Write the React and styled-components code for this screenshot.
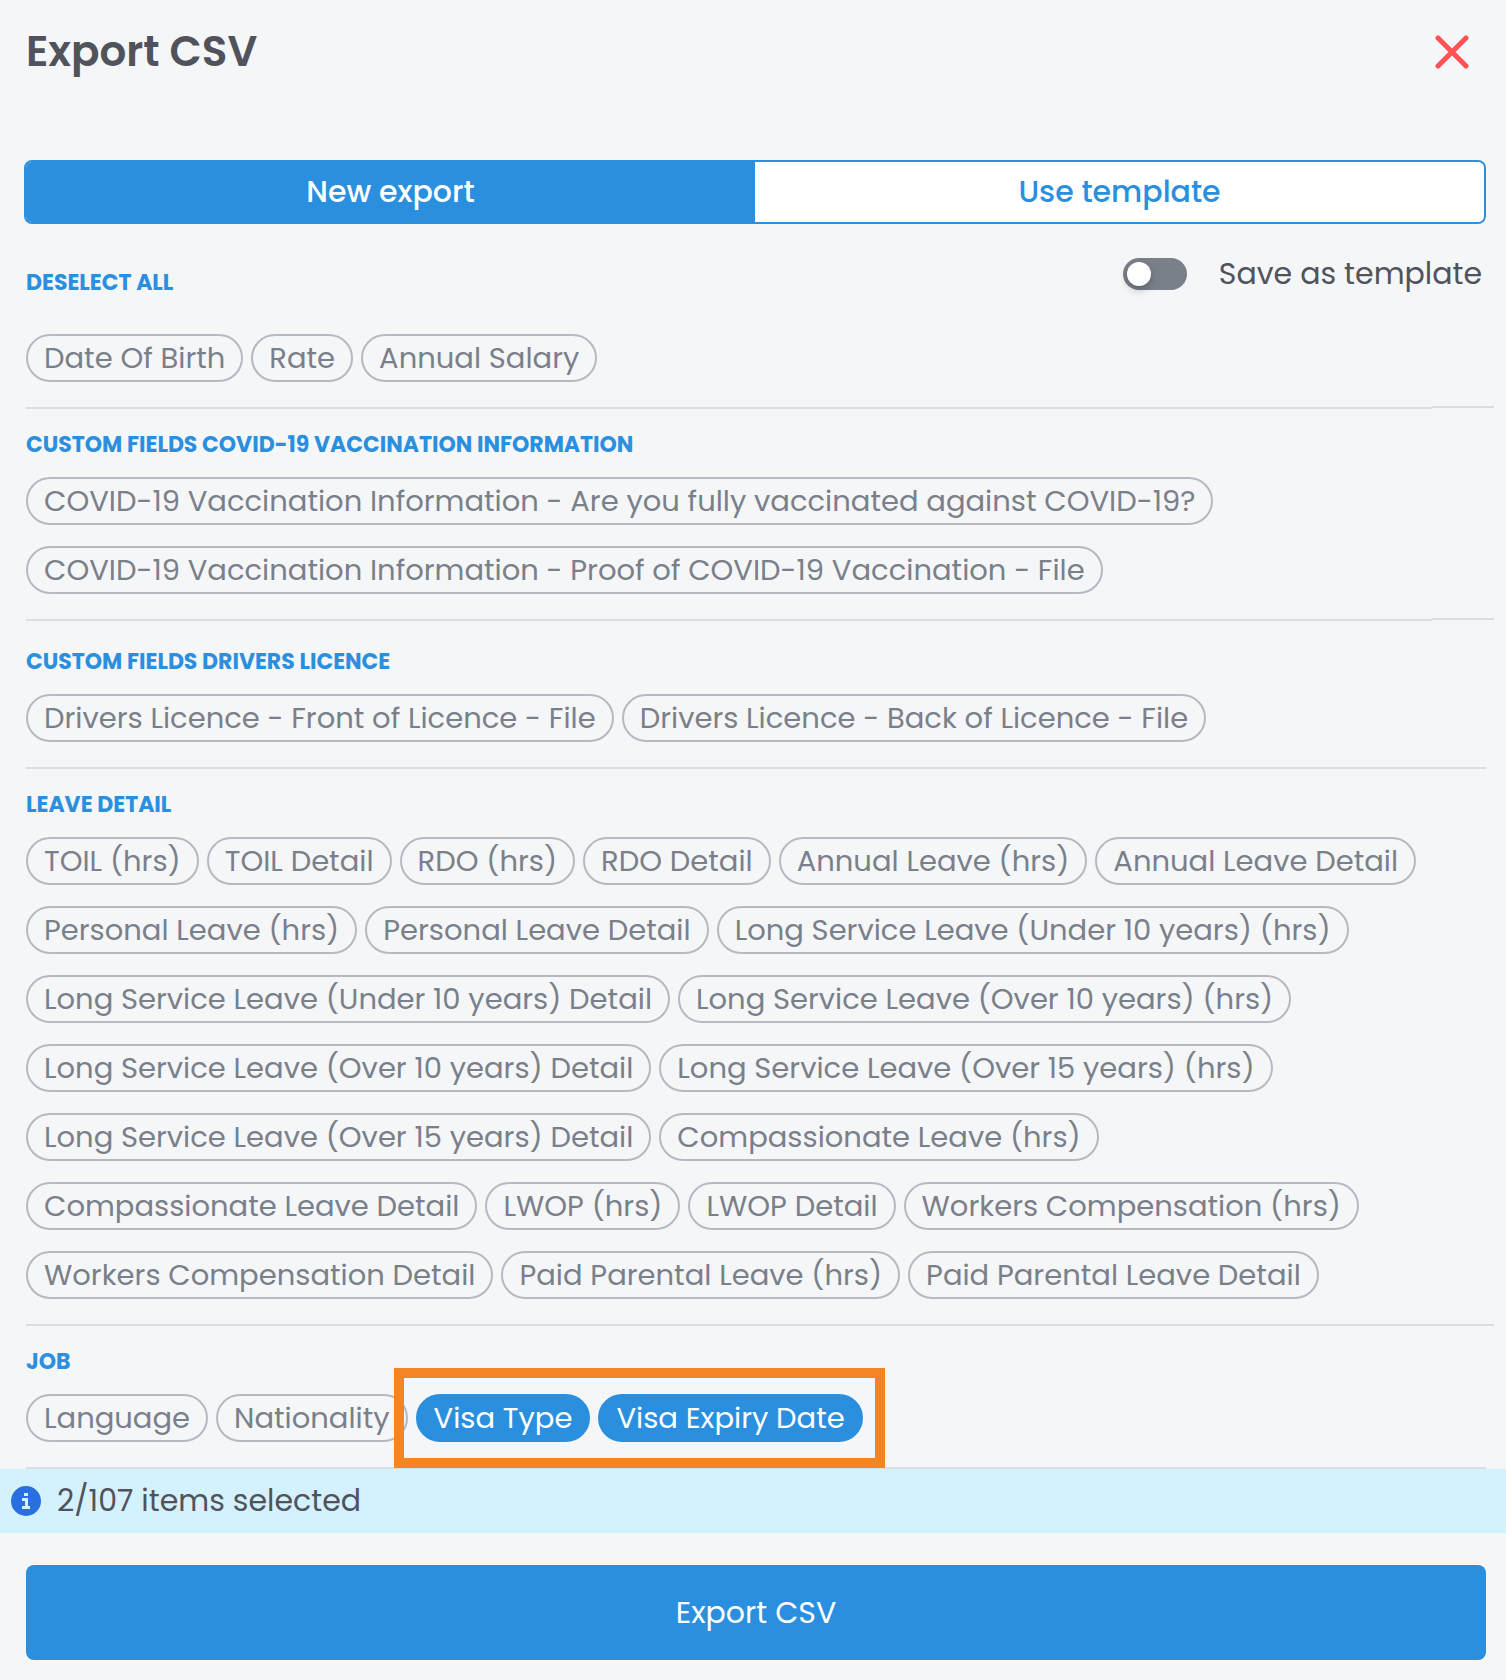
import { useState } from 'react'
import styled, { createGlobalStyle } from 'styled-components'

const general = ['Date Of Birth', 'Rate', 'Annual Salary']

const covid = [
  'COVID-19 Vaccination Information - Are you fully vaccinated against COVID-19?',
  'COVID-19 Vaccination Information - Proof of COVID-19 Vaccination - File',
]

const licence = [
  'Drivers Licence - Front of Licence - File',
  'Drivers Licence - Back of Licence - File',
]

const leave = [
  'TOIL (hrs)',
  'TOIL Detail',
  'RDO (hrs)',
  'RDO Detail',
  'Annual Leave (hrs)',
  'Annual Leave Detail',
  'Personal Leave (hrs)',
  'Personal Leave Detail',
  'Long Service Leave (Under 10 years) (hrs)',
  'Long Service Leave (Under 10 years) Detail',
  'Long Service Leave (Over 10 years) (hrs)',
  'Long Service Leave (Over 10 years) Detail',
  'Long Service Leave (Over 15 years) (hrs)',
  'Long Service Leave (Over 15 years) Detail',
  'Compassionate Leave (hrs)',
  'Compassionate Leave Detail',
  'LWOP (hrs)',
  'LWOP Detail',
  'Workers Compensation (hrs)',
  'Workers Compensation Detail',
  'Paid Parental Leave (hrs)',
  'Paid Parental Leave Detail',
]

const job = ['Language', 'Nationality']
const visa = ['Visa Type', 'Visa Expiry Date']

function App() {
  const [tab, setTab] = useState('new')
  const [saveTemplate, setSaveTemplate] = useState(false)
  const [selected, setSelected] = useState(visa)

  const toggle = (name) => {
    setSelected((prev) =>
      prev.includes(name) ? prev.filter((item) => item !== name) : [...prev, name]
    )
  }

  const renderChips = (names) =>
    names.map((name) => (
      <Chip
        key={name}
        type="button"
        $active={selected.includes(name)}
        aria-pressed={selected.includes(name)}
        onClick={() => toggle(name)}
      >
        {name}
      </Chip>
    ))

  return (
    <Panel>
      <GlobalStyle />
      <Header>
        <Title>Export CSV</Title>
        <CloseButton type="button" aria-label="Close">
          <svg width="34" height="34" viewBox="0 0 34 34" fill="none" stroke="#ff5353" strokeWidth="5" strokeLinecap="round">
            <path d="M3 3L31 31M31 3L3 31" />
          </svg>
        </CloseButton>
      </Header>

      <Tabs>
        <Tab type="button" $active={tab === 'new'} onClick={() => setTab('new')}>
          New export
        </Tab>
        <Tab type="button" $active={tab === 'template'} onClick={() => setTab('template')}>
          Use template
        </Tab>
      </Tabs>

      <Toolbar>
        <DeselectButton type="button" onClick={() => setSelected([])}>
          DESELECT ALL
        </DeselectButton>
        <SwitchLabel htmlFor="save-template">
          <Switch
            id="save-template"
            type="checkbox"
            checked={saveTemplate}
            onChange={(e) => setSaveTemplate(e.target.checked)}
          />
          Save as template
        </SwitchLabel>
      </Toolbar>

      <Section>
        <Chips>{renderChips(general)}</Chips>
        <SteppedDivider />
      </Section>

      <Section>
        <SectionTitle>CUSTOM FIELDS COVID-19 VACCINATION INFORMATION</SectionTitle>
        <Chips>{renderChips(covid)}</Chips>
        <SteppedDivider />
      </Section>

      <Section>
        <SectionTitle $spaced>CUSTOM FIELDS DRIVERS LICENCE</SectionTitle>
        <Chips>{renderChips(licence)}</Chips>
        <Divider />
      </Section>

      <Section>
        <SectionTitle>LEAVE DETAIL</SectionTitle>
        <Chips>{renderChips(leave)}</Chips>
        <Divider $wide />
      </Section>

      <Section>
        <SectionTitle>JOB</SectionTitle>
        <Chips>
          {renderChips(job)}
          <Highlight>{renderChips(visa)}</Highlight>
        </Chips>
        <Divider />
      </Section>

      <InfoBar>
        <svg width="30" height="30" viewBox="0 0 30 30">
          <circle cx="15" cy="15" r="15" fill="#2a6fdf" />
          <path d="M13 7h4v3h-4zM11 12h6v8h2v3h-8v-3h3v-5h-3z" fill="#d4f2fe" />
        </svg>
        {selected.length}/107 items selected
      </InfoBar>

      <ExportButton type="button">Export CSV</ExportButton>
    </Panel>
  )
}

const GlobalStyle = createGlobalStyle`
  * {
    box-sizing: border-box;
  }

  body {
    margin: 0;
    background: #f5f6f8;
  }

  body, button, input {
    font-family: Poppins, Inter, sans-serif;
  }
`

const Panel = styled.main`
  display: flex;
  flex-direction: column;
  color: #50535b;
  font-size: 30px;
  line-height: 42px;
`

const Header = styled.header`
  display: flex;
  align-items: center;
  justify-content: space-between;
  height: 103px;
  padding: 0 30px 0 26px;
`

const Title = styled.h1`
  margin: 0;
  font-size: 42px;
  font-weight: 600;
  line-height: 60px;
`

const CloseButton = styled.button`
  display: flex;
  padding: 7px;
  border: 0;
  background: none;
  cursor: pointer;
`

const Tabs = styled.div`
  display: flex;
  height: 64px;
  margin: 57px 20px 0 24px;
  border: 2px solid #2a8fde;
  border-radius: 8px;
  overflow: hidden;
`

const Tab = styled.button`
  flex: 1;
  border: 0;
  background: ${(props) => (props.$active ? '#2a8fde' : '#fff')};
  color: ${(props) => (props.$active ? '#fff' : '#2a8fde')};
  font-size: 30px;
  font-weight: 500;
  cursor: pointer;
`

const Toolbar = styled.div`
  display: flex;
  align-items: flex-start;
  justify-content: space-between;
  margin: 29px 24px 36px 26px;
`

const DeselectButton = styled.button`
  margin-top: 15px;
  padding: 0;
  border: 0;
  background: none;
  color: #2a8fde;
  font-size: 22px;
  font-weight: 700;
  line-height: 30px;
  cursor: pointer;
`

const SwitchLabel = styled.label`
  display: flex;
  align-items: center;
  gap: 32px;
`

const Switch = styled.input`
  appearance: none;
  display: flex;
  justify-content: ${(props) => (props.checked ? 'flex-end' : 'flex-start')};
  width: 64px;
  height: 32px;
  margin: 0;
  padding: 4px;
  border-radius: 16px;
  background: ${(props) => (props.checked ? '#2a8fde' : '#7a808a')};
  cursor: pointer;

  &::before {
    content: '';
    width: 24px;
    height: 24px;
    border-radius: 50%;
    background: #fff;
    box-shadow: 0 4px 8px rgba(0, 0, 0, 0.24);
  }
`

const Section = styled.section`
  padding: 0 20px 0 26px;
`

const SectionTitle = styled.h2`
  margin: 0;
  padding: ${(props) => (props.$spaced ? '26px' : '21px')} 0 17px;
  color: #2a8fde;
  font-size: 22px;
  font-weight: 700;
  line-height: 30px;
`

const Chips = styled.div`
  display: flex;
  flex-wrap: wrap;
  gap: 21px 8px;
`

const Chip = styled.button`
  height: 48px;
  padding: 0 16px;
  border: 2px solid ${(props) => (props.$active ? '#2a8fde' : '#b7b8c1')};
  border-radius: 24px;
  background: ${(props) => (props.$active ? '#2a8fde' : 'transparent')};
  color: ${(props) => (props.$active ? '#fff' : '#7a808a')};
  font-size: 29px;
  line-height: 42px;
  white-space: nowrap;
  cursor: pointer;
`

const Highlight = styled.div`
  position: relative;
  display: flex;
  gap: 8px;

  &::after {
    content: '';
    position: absolute;
    inset: -26px -22px;
    border: 10px solid #f48525;
    pointer-events: none;
  }
`

const Divider = styled.hr`
  height: 2px;
  margin: 25px ${(props) => (props.$wide ? '-8px' : '0')} 0 0;
  border: 0;
  background: #dcdde0;
`

/* the last stretch of the rule sits one pixel higher */
const SteppedDivider = styled.hr`
  display: flex;
  height: 3px;
  margin: 24px -8px 0 0;
  border: 0;
  overflow: visible;

  &::before {
    content: '';
    flex: 1;
    height: 2px;
    margin-top: 1px;
    background: #dcdde0;
  }

  &::after {
    content: '';
    width: 62px;
    height: 2px;
    background: #dcdde0;
  }
`

const InfoBar = styled.div`
  display: flex;
  align-items: center;
  gap: 16px;
  height: 64px;
  padding: 0 11px;
  background: #d4f2fe;
`

const ExportButton = styled.button`
  height: 95px;
  margin: 32px 20px 20px 26px;
  border: 0;
  border-radius: 8px;
  background: #2a8fde;
  color: #fff;
  font-size: 30px;
  cursor: pointer;
`

export default App
